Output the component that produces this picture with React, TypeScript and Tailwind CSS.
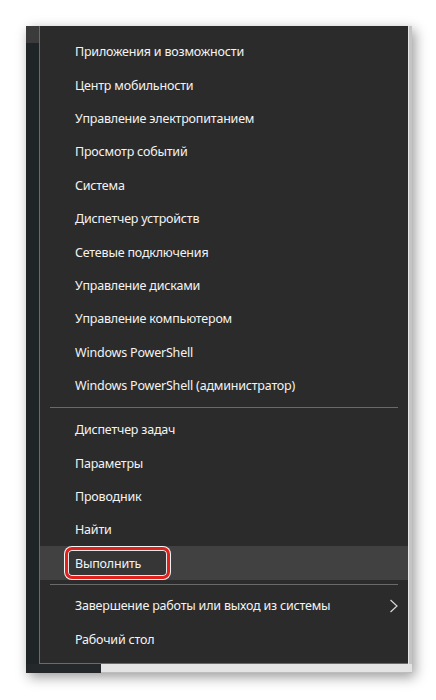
import React from "react";

const group1 = [
  "Приложения и возможности",
  "Центр мобильности",
  "Управление электропитанием",
  "Просмотр событий",
  "Система",
  "Диспетчер устройств",
  "Сетевые подключения",
  "Управление дисками",
  "Управление компьютером",
  "Windows PowerShell",
  "Windows PowerShell (администратор)",
];

const group2 = ["Диспетчер задач", "Параметры", "Проводник", "Найти"];

function Row({ label, children, highlight }: { label: string; children?: React.ReactNode; highlight?: boolean }) {
  return (
    <div
      className={`relative flex h-[33.4px] items-center pl-[35px] pr-[10px] pt-[2px] text-[12.5px] tracking-[-0.2px] text-[#f3f3f3] ${
        highlight ? "bg-[#414141]" : ""
      }`}
    >
      <span className="relative z-10">{label}</span>
      {children}
    </div>
  );
}

function Sep({ h }: { h: string }) {
  return (
    <div className={`flex ${h} items-center pl-[10px] pr-[10px]`}>
      <div className="h-px w-full bg-[#6a6a6a]" />
    </div>
  );
}

export default function App() {
  return (
    <div
      className="h-[700px] w-[436px] bg-white pl-[26px] pt-[26px]"
      style={{ fontFamily: '"Segoe UI", "Noto Sans", "Open Sans", sans-serif' }}
    >
      <div className="flex h-[647px] w-[386px] flex-col shadow-[3px_4px_12px_rgba(0,0,0,0.4)]">
        <div className="flex h-[638px]">
          <div className="flex w-[13px] flex-col bg-[#1f2427]">
            <div className="h-[17px] bg-[#3b3b3b]" />
          </div>
          <div className="flex w-[369px] flex-col border-l border-b border-[#6b6b6b] bg-[#2b2b2b] pt-[9px]">
            {group1.map((l) => (
              <Row key={l} label={l} />
            ))}
            <Sep h="h-[10.6px]" />
            {group2.map((l) => (
              <Row key={l} label={l} />
            ))}
            <Row label="Выполнить" highlight>
              <div className="absolute left-[25px] top-[1px] h-[32px] w-[105px] rounded-[7px] border-[3px] border-[#e3211c] bg-[#363636] shadow-[0_0_0_1px_#f5f5f5,inset_0_0_0_1px_#e8e8e8]" />
            </Row>
            <Sep h="h-[9px]" />
            <Row label="Завершение работы или выход из системы">
              <svg className="absolute left-[349px] top-[10px]" width="10" height="14" viewBox="0 0 10 14">
                <path d="M1.5 1 L8 7 L1.5 13" fill="none" stroke="#d8d8d8" strokeWidth="1.2" />
              </svg>
            </Row>
            <Row label="Рабочий стол" />
          </div>
          <div className="w-[4px] border-l border-[#e6e6e6] bg-[#c4c4c4]" />
        </div>
        <div className="flex h-[9px]">
          <div className="w-[75px] bg-[#24282b]" />
          <div className="flex-1 border-b border-[#bdbdbd] bg-[#e4e4e4]" />
        </div>
      </div>
    </div>
  );
}
